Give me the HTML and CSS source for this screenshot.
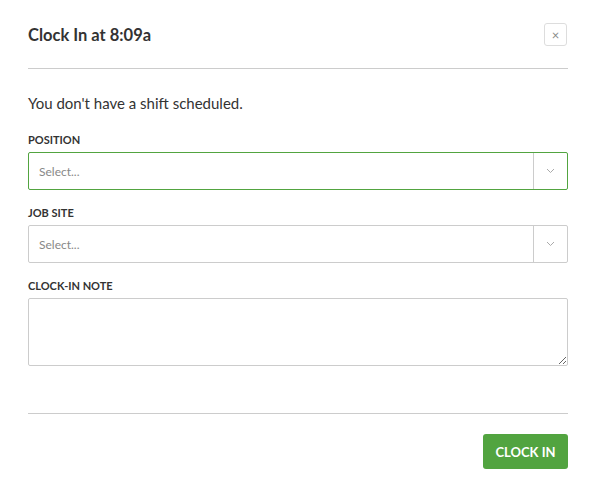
FILE: index.html
```html
<!DOCTYPE html>
<html lang="en">
<head>
    <meta charset="UTF-8">
    <meta name="viewport" content="width=device-width, initial-scale=1.0">
    <title>Clock In</title>
    <link rel="stylesheet" href="styles.css">
</head>
<body>
    <div class="modal">
        <div class="modal_head">
            <h2>Clock In at 8:09a</h2>
            <a href="#none" class="close">&times;</a>
        </div>
        <div class="modal_body">
            <p class="notice">You don't have a shift scheduled.</p>
            <div class="field">
                <label>Position</label>
                <div class="select active">
                    <span class="ph">Select...</span>
                    <span class="arrow">
                        <svg width="9" height="6" viewBox="0 0 9 6"><path d="M1 1l3.5 3.5L8 1" fill="none" stroke="#aaa" stroke-width="1"/></svg>
                    </span>
                </div>
            </div>
            <div class="field">
                <label>Job Site</label>
                <div class="select">
                    <span class="ph">Select...</span>
                    <span class="arrow">
                        <svg width="9" height="6" viewBox="0 0 9 6"><path d="M1 1l3.5 3.5L8 1" fill="none" stroke="#aaa" stroke-width="1"/></svg>
                    </span>
                </div>
            </div>
            <div class="field">
                <label>Clock-In Note</label>
                <textarea></textarea>
            </div>
        </div>
        <div class="modal_foot">
            <a href="#none" class="btn">Clock In</a>
        </div>
    </div>
</body>
</html>
```

FILE: styles.css
```css
*{padding: 0;
margin: 0;
box-sizing: border-box;}
body{
    font-family: Lato, "Noto Sans", sans-serif;
    color: #333;
    background: #fff;
}
.modal{
    width: 594px;
    padding: 0 26px 0 28px;
}
.modal_head{
    display: flex;
    justify-content: space-between;
    align-items: center;
    padding: 23px 0 22px;
    border-bottom: 1px solid #ccc;
}
.modal_head h2{
    font-size: 16.5px;
    font-weight: bold;
    color: #333;
}
.close{
    width: 23px;
    height: 23px;
    border: 1px solid #ddd;
    border-radius: 3px;
    display: flex;
    justify-content: center;
    align-items: center;
    color: #888;
    font-size: 13px;
    text-decoration: none;
    margin-right: 1px;
}
.modal_body{
    padding: 25px 0 47px;
    border-bottom: 1px solid #ccc;
}
.notice{
    font-size: 15px;
    line-height: 18px;
    margin-bottom: 21px;
}
.field{
    margin-bottom: 16px;
}
.field:last-child{
    margin-bottom: 0;
}
.field label{
    display: block;
    font-size: 11px;
    font-weight: bold;
    text-transform: uppercase;
    line-height: 14px;
    margin-bottom: 5px;
    color: #333;
}
.select{
    display: flex;
    height: 38px;
    border: 1px solid #ccc;
    border-radius: 2px;
    align-items: stretch;
}
.select.active{
    border-color: #52a440;
}
.ph{
    flex: 1;
    display: flex;
    align-items: center;
    padding-left: 10px;
    font-size: 12px;
    color: #888;
}
.arrow{
    width: 34px;
    border-left: 1px solid #ccc;
    display: flex;
    justify-content: center;
    align-items: center;
}
textarea{
    display: block;
    width: 100%;
    height: 68px;
    border: 1px solid #ccc;
    border-radius: 2px;
}
.modal_foot{
    display: flex;
    justify-content: flex-end;
    padding-top: 20px;
}
.btn{
    width: 85px;
    height: 35px;
    background: #52a440;
    color: #fff;
    border-radius: 3px;
    font-size: 13px;
    font-weight: bold;
    text-transform: uppercase;
    text-decoration: none;
    display: flex;
    justify-content: center;
    align-items: center;
}
```
